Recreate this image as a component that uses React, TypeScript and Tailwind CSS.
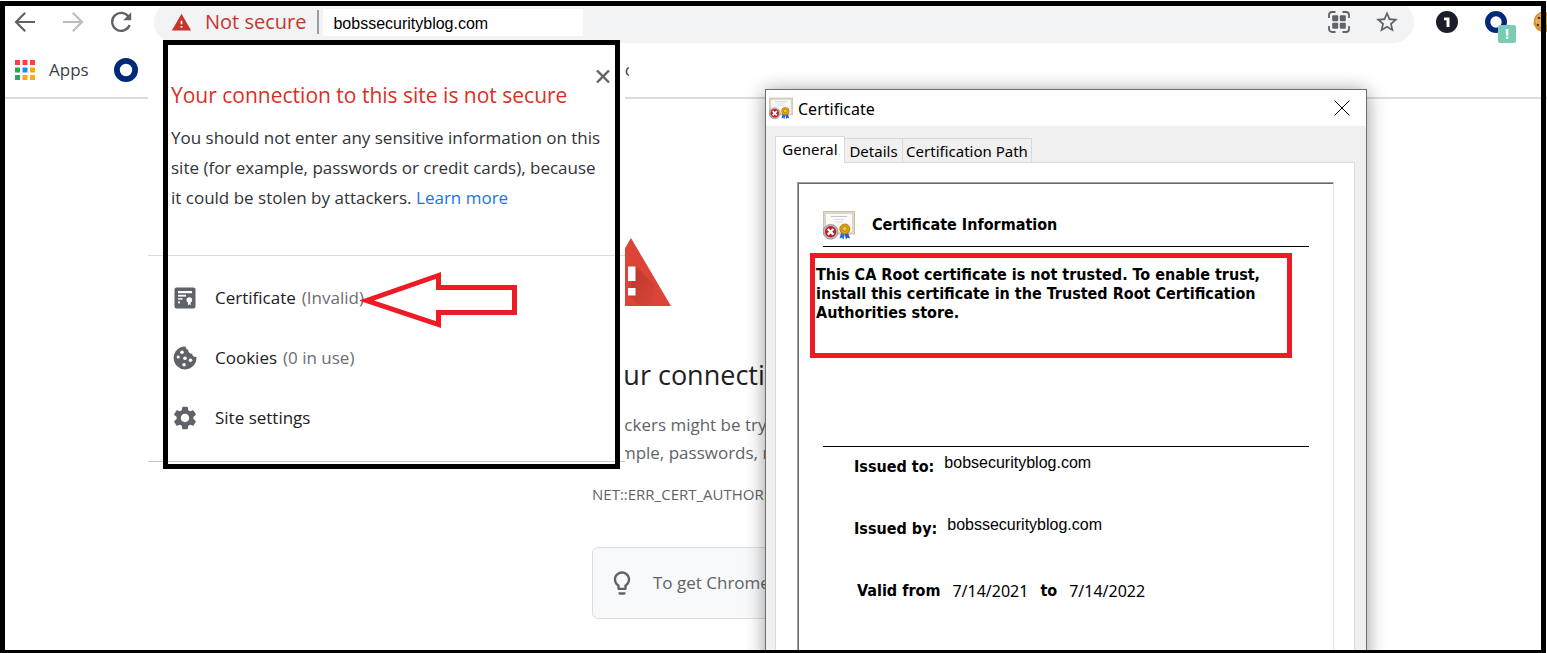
import type { ReactNode } from "react";
import { MdLightbulbOutline, MdSettings, MdStarBorder, MdWarning } from "react-icons/md";

const ARIAL = "font-['Liberation_Sans',sans-serif]";
const TAHOMA_BOLD = "font-['DejaVu_Sans_Condensed','DejaVu_Sans',sans-serif] font-bold";

function BackIcon() {
  return (
    <svg width="24" height="24" viewBox="0 0 24 24" fill="none" stroke="currentColor" strokeWidth="2.2">
      <path d="M22 12H3.5M12.2 2.8L3 12l9.2 9.2" />
    </svg>
  );
}

function ReloadIcon() {
  return (
    <svg width="24" height="24" viewBox="0 0 24 24">
      <path d="M19.6 6.8A9 9 0 1 0 20.6 15" fill="none" stroke="currentColor" strokeWidth="2.3" />
      <path d="M22.2 2.2v8h-8z" fill="currentColor" />
    </svg>
  );
}

function QrIcon() {
  return (
    <svg width="22" height="22" viewBox="0 0 22 22">
      <path
        d="M1 7V4a3 3 0 0 1 3-3h3.500M14.500 1H18a3 3 0 0 1 3 3v3M21 15v3a3 3 0 0 1-3 3h-3.500M7.500 21H4a3 3 0 0 1-3-3v-3"
        fill="none"
        stroke="currentColor"
        strokeWidth="1.8"
      />
      <g fill="currentColor">
        <rect x="4.200" y="4.200" width="6" height="6" rx="1" />
        <rect x="11.800" y="4.200" width="6" height="6" rx="1" />
        <rect x="4.200" y="11.800" width="6" height="6" rx="1" />
        <rect x="11.800" y="11.800" width="6" height="6" rx="1" />
      </g>
    </svg>
  );
}

function AppsIcon() {
  const colors = ["#f9403a", "#f9403a", "#f9403a", "#2ea55b", "#1e8cf5", "#f9ab00", "#2ea55b", "#f9ab00", "#f9ab00"];
  return (
    <svg width="20" height="20" viewBox="0 0 20 20">
      {colors.map((c, i) => (
        <rect key={i} x={(i % 3) * 7.5} y={Math.floor(i / 3) * 7.5} width="5" height="5" fill={c} />
      ))}
    </svg>
  );
}

function RingIcon({ size }: { size: number }) {
  return (
    <svg width={size} height={size} viewBox="0 0 24 24">
      <circle cx="12" cy="12" r="9.1" fill="#fff" stroke="#00297a" strokeWidth="5.800" />
    </svg>
  );
}

function CookieEmoji() {
  return (
    <svg width="24" height="22" viewBox="0 0 24 22" className="shrink-0">
      <path d="M3 4l4-3 6 0 7 4 3 7-4 7-8 3-7-3-3.500-6 .5-5z" fill="#d9902f" />
      <path d="M4 5l4-3 5 .5 3 9-6 6-6-3-2-5z" fill="#e9ab55" />
      <g fill="#5b3413">
        <circle cx="6" cy="7" r="1.300" />
        <circle cx="10" cy="4" r="1" />
        <circle cx="5" cy="14" r="1.200" />
        <circle cx="10" cy="11" r="1.500" />
        <circle cx="12" cy="17" r="1.200" />
      </g>
    </svg>
  );
}

function CertFileIcon() {
  return (
    <svg width="28" height="28" viewBox="0 0 28 28">
      <rect x="3.500" y="3.500" width="21" height="21" rx="2" fill="#5f6368" />
      <g fill="#fff">
        <rect x="7" y="7" width="14" height="2.200" />
        <rect x="7" y="10.800" width="8" height="1.800" />
        <rect x="7" y="14.200" width="4.500" height="1.500" />
        <rect x="7" y="17.500" width="2" height="1.800" />
        <circle cx="18.300" cy="16" r="2.800" />
        <path d="M17 17.500h2.600v4l-1.300-1.200-1.300 1.200z" />
      </g>
    </svg>
  );
}

function CookieIcon() {
  return (
    <svg width="28" height="28" viewBox="0 0 28 28">
      <path
        d="M14.500 2.600A11.400 11.400 0 1 0 25.400 13a3.400 3.400 0 0 1-4.200-3.300 3.700 3.700 0 0 1-4.100-3.900 3.600 3.600 0 0 1-2.600-3.200z"
        fill="#5f6368"
      />
      <g fill="#fff">
        <circle cx="11" cy="8.300" r="1.800" />
        <circle cx="7.200" cy="13" r="1.600" />
        <circle cx="14" cy="14.300" r="1.800" />
        <circle cx="19.500" cy="16.300" r="1.800" />
        <circle cx="13" cy="20.800" r="1.800" />
      </g>
    </svg>
  );
}

function CertificateIcon({ width, height }: { width: number; height: number }) {
  return (
    <svg width={width} height={height} viewBox="0 0 32 29" className="shrink-0">
      <rect x="0.500" y="0.500" width="31" height="22.500" fill="#ddd6c6" stroke="#c9c1b0" />
      <rect x="3" y="3" width="26" height="18" fill="#fbfaf6" />
      <g stroke="#b9bfce" strokeWidth="0.900">
        <path d="M8 5.500h16" />
        <path d="M11 8.500h10M12 11h8" stroke="#d3d7e2" />
      </g>
      <path d="M18.500 20l-2 7.500 2.500-.8 1.500 2 1.800-7z" fill="#2c72d8" />
      <path d="M24.500 20l2.500 7.500-2.600-.8-1.500 2-1.300-7z" fill="#1f5fc4" />
      <circle cx="21.800" cy="18" r="5" fill="#dd9f12" stroke="#b87f0c" strokeWidth="1" />
      <circle cx="21.800" cy="17.800" r="2.400" fill="#f1c544" stroke="#b17a0a" strokeWidth="0.700" />
      <circle cx="7.600" cy="20.800" r="7.400" fill="#bdbdbd" stroke="#858585" strokeWidth="0.700" />
      <circle cx="7.600" cy="20.800" r="5.700" fill="#c0222b" />
      <path d="M4.800 18l5.600 5.600M10.400 18l-5.600 5.600" stroke="#fff" strokeWidth="2.200" />
    </svg>
  );
}

function Toolbar() {
  return (
    <header className="flex h-11 items-center pl-px text-[#5f6368]">
      <button aria-label="Back" className="flex w-12 justify-center">
        <BackIcon />
      </button>
      <button aria-label="Forward" disabled className="flex w-12 rotate-180 justify-center text-[#bbbdbf]">
        <BackIcon />
      </button>
      <button aria-label="Reload" className="flex w-12 justify-center">
        <ReloadIcon />
      </button>
      <div className="ml-[9px] flex h-[42px] flex-1 items-center rounded-full bg-[#f1f3f4] pl-[17px] pr-[14px]">
        <MdWarning size={21} className="text-[#c5362b]" />
        <span className="ml-[13px] text-[20px] leading-7 text-[#c5362b]">Not secure</span>
        <span className="ml-[11px] h-6 w-0.5 bg-[#9b9da0]" />
        <input
          aria-label="Address"
          defaultValue="bobssecurityblog.com"
          className={`ml-1 h-[27px] w-[260px] bg-white pl-[10px] pt-1 text-[16px] text-black outline-none ${ARIAL}`}
        />
        <span className="flex-1" />
        <button aria-label="QR code">
          <QrIcon />
        </button>
        <button aria-label="Bookmark this page" className="ml-6">
          <MdStarBorder size={26} />
        </button>
      </div>
      <div className="flex w-[133px] items-center pl-[22px]">
        <button
          aria-label="Password extension"
          className="flex size-[22px] shrink-0 items-center justify-center rounded-full bg-[#1b1d29]"
        >
          <svg width="8" height="10" viewBox="0 0 8 10">
            <path d="M1 0.500h5.500V10H3.500V3.300H1z" fill="#fff" />
          </svg>
        </button>
        <button aria-label="Security extension" className="relative ml-[27px] shrink-0">
          <RingIcon size={22} />
          <span className="absolute left-[13px] top-[14px] flex size-[18px] items-center justify-center rounded-xs bg-[#7bcbb5] text-[14px] font-bold leading-none text-white">
            !
          </span>
        </button>
        <button aria-label="Cookie extension" className="ml-[26px] shrink-0">
          <CookieEmoji />
        </button>
      </div>
    </header>
  );
}

function BookmarksBar() {
  return (
    <nav className="flex h-[55px] items-center border-b-2 border-[#dadce0] pb-[2px] pl-[15px] text-[17px] text-[#3c4043]">
      <a href="#apps" className="flex items-center gap-[14px]">
        <AppsIcon />
        Apps
      </a>
      <a href="#home" aria-label="Home" className="ml-[25px]">
        <RingIcon size={24} />
      </a>
      <a href="#bookmark" className="ml-[487px] w-1 overflow-hidden">
        c
      </a>
    </nav>
  );
}

function Interstitial() {
  return (
    <main className="overflow-hidden whitespace-nowrap pl-[592px] pt-[139px] text-[#5f6368]">
      <svg width="80" height="68" viewBox="0 0 80 68">
        <defs>
          <linearGradient id="shade" x1="0" y1="0" x2="1" y2="1">
            <stop offset="0" stopColor="#000" stopOpacity="0.18" />
            <stop offset="1" stopColor="#000" stopOpacity="0" />
          </linearGradient>
        </defs>
        <path d="M39 0l40 68H-1z" fill="#db4437" />
        <path d="M43.500 28l18 18v22H49L36 57z" fill="url(#shade)" />
        <path d="M36 28.500h7.500V43H36zM36 50h7.500v7.500H36z" fill="#fff" />
      </svg>
      <h1 className="mt-[49px] text-[27px] leading-10 text-[#202124]">Your connection</h1>
      <p className="mt-4 text-[17px] leading-7">
        Attackers might be trying
        <br />
        example, passwords, mes
      </p>
      <p className="mt-[15px] text-[15px] leading-6">NET::ERR_CERT_AUTHORITY</p>
      <div className="mt-[41px] flex h-[72px] w-[600px] items-center gap-[17px] rounded-md border border-[#dadce0] bg-[#f8f9fa] pl-[15px] text-[17px]">
        <MdLightbulbOutline size={28} />
        <p>To get Chrome’s</p>
      </div>
    </main>
  );
}

function PopupRow({ icon, label, note }: { icon: ReactNode; label: string; note?: string }) {
  return (
    <li>
      <button className="flex h-[60px] items-center text-[17px] text-[#202124]">
        {icon}
        <span className="ml-4">{label}</span>
        {note && <span className="ml-[6px] text-[#6b6e72]">{note}</span>}
      </button>
    </li>
  );
}

function SiteInfoPopup() {
  return (
    <section className="absolute left-[148px] top-[54px] w-[477px] border-b border-[#c8c8c8] bg-white pb-[13px] pt-[26px]">
      <div className="pl-[23px]">
        <h2 className="text-[21px] leading-[30px] text-[#d93025]">Your connection to this site is not secure</h2>
        <p className="mt-[13px] whitespace-nowrap text-[17px] leading-[30px] text-[#303336]">
          You should not enter any sensitive information on this
          <br />
          site (for example, passwords or credit cards), because
          <br />
          it could be stolen by attackers.{" "}
          <a href="#learn" className="text-[#1a73e8]">
            Learn more
          </a>
        </p>
      </div>
      <ul className="mt-[42px] border-t border-[#dadce0] pl-[23px] pt-3">
        <PopupRow icon={<CertFileIcon />} label="Certificate" note="(Invalid)" />
        <PopupRow icon={<CookieIcon />} label="Cookies" note="(0 in use)" />
        <PopupRow icon={<MdSettings size={28} className="text-[#5f6368]" />} label="Site settings" />
      </ul>
      <button aria-label="Close" className="absolute right-[15px] top-4 text-[#5f6368]">
        <svg width="14" height="14" viewBox="0 0 14 14" stroke="currentColor" strokeWidth="2.400">
          <path d="M1 0.500l12 12M13 0.500l-12 12" />
        </svg>
      </button>
      <div className="pointer-events-none absolute -bottom-2 -top-[14px] left-[15px] right-[5px] border-[5px] border-black" />
      <svg
        width="160"
        height="60"
        viewBox="0 0 160 60"
        className="pointer-events-none absolute left-[212px] top-[216px]"
        fill="none"
        stroke="#ed1c24"
        strokeWidth="5"
      >
        <path d="M6.500 30.500L78.500 5.500V17.500H154.500V42.500H78.500V54.500Z" />
      </svg>
    </section>
  );
}

function CertificateDialog() {
  return (
    <section
      role="dialog"
      aria-label="Certificate"
      className="absolute -bottom-6 left-[765px] top-[89px] flex w-[602px] flex-col border border-[#6e6e6e] bg-[#f0f0f0] font-['Noto_Sans',sans-serif] text-black shadow-[0_2px_18px_rgba(0,0,0,0.4)]"
    >
      <div className="flex h-9 shrink-0 items-center bg-white pl-[3px] pr-4">
        <CertificateIcon width={24} height={23} />
        <h2 className="ml-[5px] flex-1 pt-px text-[16px]">Certificate</h2>
        <button aria-label="Close">
          <svg width="16" height="16" viewBox="0 0 16 16" stroke="#000" strokeWidth="1">
            <path d="M0.500 0.500l15 15M15.500 0.500l-15 15" />
          </svg>
        </button>
      </div>
      <div className="flex flex-1 flex-col pl-[9px] pr-[11px] pt-[10px]">
        <div role="tablist" className="flex items-end text-[15px] leading-5">
          <button
            role="tab"
            aria-selected="true"
            className="relative -mb-px h-[27px] w-[70px] border border-b-0 border-[#d9d9d9] bg-white pb-[3px]"
          >
            General
          </button>
          <button role="tab" className="h-6 w-[57px] border-t border-[#d9d9d9]">
            Details
          </button>
          <button role="tab" className="h-6 w-[130px] border border-b-0 border-[#d9d9d9]">
            Certification Path
          </button>
        </div>
        <div className="flex flex-1 flex-col border border-[#d9d9d9] bg-white pl-[21px] pr-5 pt-[19px]">
          <div className="flex flex-1 flex-col border-l border-r border-t border-[#a0a0a0] border-r-[#e3e3e3]">
            <div className={`flex-1 border-l border-t border-[#696969] pt-5 text-[16px] ${TAHOMA_BOLD}`}>
              <div className="mx-6 flex h-[43px] items-center gap-[17px] border-b border-black">
                <CertificateIcon width={32} height={29} />
                <h3>Certificate Information</h3>
              </div>
              <p className="ml-[11px] mr-[41px] mt-[6px] h-[105px] whitespace-nowrap border-[5px] border-[#ed1c24] pl-px pt-[7px] leading-[19px]">
                This CA Root certificate is not trusted. To enable trust,
                <br />
                install this certificate in the Trusted Root Certification
                <br />
                Authorities store.
              </p>
              <hr className="mx-6 mt-[88px] border-black" />
              <dl className="pl-[55px] pt-2 leading-6">
                <div className="flex h-[62px] gap-[10px]">
                  <dt>Issued to:</dt>
                  <dd className={`font-normal leading-4 ${ARIAL}`}>bobsecurityblog.com</dd>
                </div>
                <div className="flex h-[62px] gap-[10px]">
                  <dt>Issued by:</dt>
                  <dd className={`font-normal leading-4 ${ARIAL}`}>bobssecurityblog.com</dd>
                </div>
                <div className="flex gap-3 pl-[3px]">
                  <dt>Valid from</dt>
                  <dd className="flex gap-3">
                    <span className="font-['Noto_Sans',sans-serif] font-normal">7/14/2021</span>
                    <span>to</span>
                    <span className="font-['Noto_Sans',sans-serif] font-normal">7/14/2022</span>
                  </dd>
                </div>
              </dl>
            </div>
          </div>
        </div>
      </div>
    </section>
  );
}

export default function App() {
  return (
    <div className="relative h-screen overflow-hidden bg-white font-['Open_Sans',sans-serif]">
      <Toolbar />
      <BookmarksBar />
      <Interstitial />
      <SiteInfoPopup />
      <CertificateDialog />
      <div className="pointer-events-none absolute bottom-0 left-0 right-px top-px border-[5px] border-b-[3px] border-black" />
    </div>
  );
}
